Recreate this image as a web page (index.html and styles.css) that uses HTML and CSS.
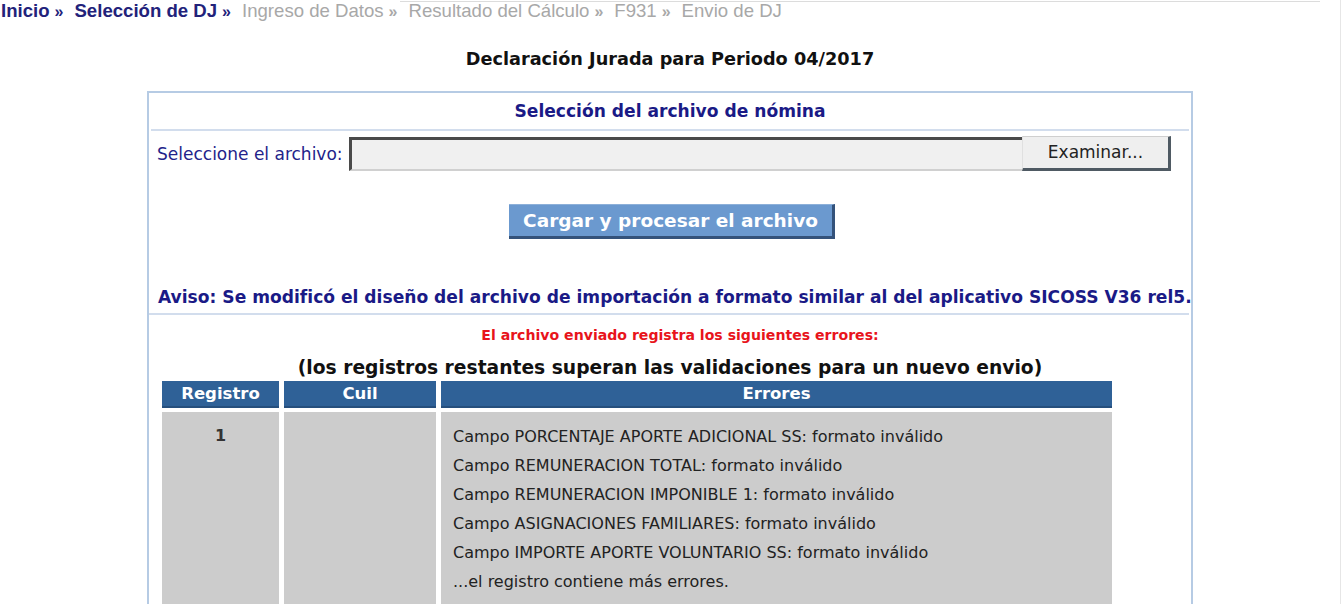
FILE: index.html
```html
<!DOCTYPE html>
<html lang="es">
<head>
<meta charset="utf-8">
<title>Selección de DJ</title>
<link rel="stylesheet" href="styles.css">
</head>
<body>
<div class="page">
  <div class="topline"></div>
  <nav class="crumbs"><span class="crumb on">Inicio</span><span class="sep on">»</span><span class="crumb on">Selección de DJ</span><span class="sep on">»</span><span class="crumb">Ingreso de Datos</span><span class="sep">»</span><span class="crumb">Resultado del Cálculo</span><span class="sep">»</span><span class="crumb">F931</span><span class="sep">»</span><span class="crumb">Envio de DJ</span></nav>
  <h1 class="title">Declaración Jurada para Periodo 04/2017</h1>
  <div class="box">
    <div class="box-head">Selección del archivo de nómina</div>
    <div class="file-row">
      <span class="file-label">Seleccione el archivo:</span>
      <div class="file-input"></div>
      <div class="file-btn">Examinar...</div>
    </div>
    <div class="submit-row">
      <div class="submit">Cargar y procesar el archivo</div>
    </div>
    <div class="aviso">Aviso: Se modificó el diseño del archivo de importación a formato similar al del aplicativo SICOSS V36 rel5.</div>
    <div class="errors">
      <div class="err-title">El archivo enviado registra los siguientes errores:</div>
      <div class="err-sub">(los registros restantes superan las validaciones para un nuevo envio)</div>
      <table class="err-table">
        <thead>
          <tr><th class="c-reg">Registro</th><th class="c-cuil">Cuil</th><th class="c-err">Errores</th></tr>
        </thead>
        <tbody>
          <tr>
            <td class="c-reg">1</td>
            <td class="c-cuil"></td>
            <td class="c-err">
              <div class="line">Campo PORCENTAJE APORTE ADICIONAL SS: formato inválido</div>
              <div class="line">Campo REMUNERACION TOTAL: formato inválido</div>
              <div class="line">Campo REMUNERACION IMPONIBLE 1: formato inválido</div>
              <div class="line">Campo ASIGNACIONES FAMILIARES: formato inválido</div>
              <div class="line">Campo IMPORTE APORTE VOLUNTARIO SS: formato inválido</div>
              <div class="line">...el registro contiene más errores.</div>
            </td>
          </tr>
        </tbody>
      </table>
    </div>
  </div>
</div>
</body>
</html>
```
FILE: styles.css
```css
html, body {
  margin: 0;
  padding: 0;
  background: #ffffff;
}
body {
  font-family: "DejaVu Sans", Verdana, sans-serif;
  color: #111;
}
.page {
  width: 1340px;
  height: 604px;
  overflow: hidden;
  border-right: 1px solid #e6e6e6;
}
.topline {
  height: 1px;
  margin-left: 400px;
  width: 920px;
  background: #dcdcdc;
  margin-top: 1px;
}
.crumbs {
  font-family: "Liberation Sans", Arial, sans-serif;
  font-size: 18.6px;
  line-height: 18px;
  height: 20px;
  padding-left: 1px;
  color: #a8a8a8;
  white-space: nowrap;
}
.crumb.on { color: #22227a; font-weight: bold; }
.sep {
  font-size: 16px;
  font-weight: bold;
  color: #a8a8a8;
  margin: 0 11px 0 5px;
}
.sep.on { color: #22227a; }
.title {
  margin: 26px 0 0;
  font-size: 17.7px;
  line-height: 22px;
  text-align: center;
  font-weight: bold;
  color: #111;
}
.box {
  margin: 21px 0 0 147px;
  width: 1042px;
  border: 2px solid #b6cbe4;
  border-bottom: none;
  padding-bottom: 40px;
}
.box-head {
  height: 36px;
  line-height: 36px;
  margin: 0 2px;
  text-align: center;
  font-weight: bold;
  font-size: 17.1px;
  color: #1a1a86;
  border-bottom: 2px solid #d2dded;
}
.file-row {
  display: flex;
  align-items: center;
  padding: 5px 0 0 8px;
  height: 35px;
}
.file-label {
  font-size: 17px;
  color: #23238a;
  width: 192px;
  white-space: nowrap;
}
.file-input {
  width: 670px;
  height: 29px;
  background: #f0f0f0;
  border-top: 3px solid #4a4a4a;
  border-left: 3px solid #4a4a4a;
  border-bottom: 2px solid #d0d0d0;
}
.file-btn {
  width: 145px;
  height: 31px;
  line-height: 31px;
  text-align: center;
  font-size: 17px;
  color: #222;
  background: #efefef;
  border-top: 1px solid #cfcfcf;
  border-left: 1px solid #e0e0e0;
  border-right: 3px solid #4f5a63;
  border-bottom: 3px solid #4f5a63;
}
.submit-row {
  display: flex;
  justify-content: center;
  padding-top: 33px;
}
.submit {
  margin-left: 4px;
  width: 323px;
  height: 31px;
  line-height: 31px;
  background: #6b99cf;
  border-bottom: 3px solid #34527a;
  border-right: 3px solid #34527a;
  border-top: 1px solid #8db0d9;
  color: #ffffff;
  font-weight: bold;
  font-size: 18.5px;
  text-align: center;
}
.aviso {
  margin-top: 47px;
  padding-left: 9px;
  font-weight: bold;
  font-size: 17.1px;
  line-height: 22px;
  color: #1a1a86;
  padding-bottom: 5px;
  margin-right: 2px;
  white-space: nowrap;
  border-bottom: 2px solid #d2dded;
}
.errors {
  padding-top: 9px;
}
.err-title {
  text-align: center;
  font-weight: bold;
  font-size: 14.1px;
  line-height: 22px;
  color: #e8141b;
  padding-left: 20px;
}
.err-sub {
  text-align: center;
  font-weight: bold;
  font-size: 18.7px;
  line-height: 22px;
  margin-top: 11px;
  color: #111;
  white-space: nowrap;
}
.err-table {
  margin-left: 8px;
  width: 960px;
  table-layout: fixed;
  border-spacing: 5px 4px;
  border-collapse: separate;
  margin-top: -2px;
}
.err-table th {
  background: #2f6197;
  color: #ffffff;
  font-size: 16.5px;
  font-weight: bold;
  height: 27px;
  padding: 0;
  border-bottom: 2px solid #264f7d;
  box-sizing: border-box;
}
.err-table td {
  background: #cccccc;
  vertical-align: top;
  font-size: 16px;
  color: #222;
  padding: 0;
  height: 186px;
}
.c-reg { width: 117px; text-align: center; }
.c-cuil { width: 152px; }
.c-err { width: 671px; }
.err-table td.c-reg { padding-top: 14px; font-weight: bold; color: #333; }
.err-table td.c-err { padding: 14px 0 0 12px; }
.line { height: 29px; line-height: 22px; white-space: nowrap; }
```
